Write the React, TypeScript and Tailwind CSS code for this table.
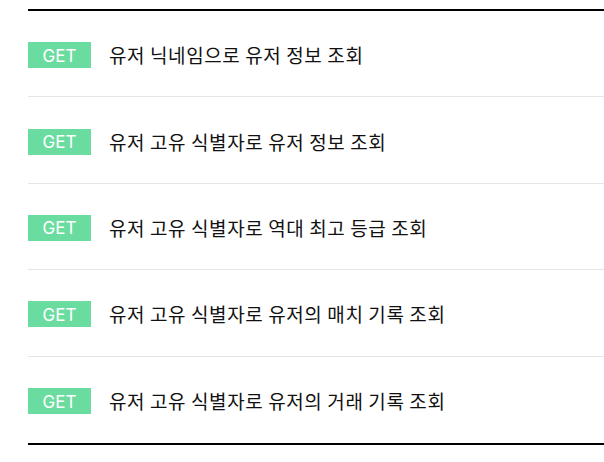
const apis = [
  '유저 닉네임으로 유저 정보 조회',
  '유저 고유 식별자로 유저 정보 조회',
  '유저 고유 식별자로 역대 최고 등급 조회',
  '유저 고유 식별자로 유저의 매치 기록 조회',
  '유저 고유 식별자로 유저의 거래 기록 조회',
]

export default function App() {
  return (
    <div className="min-h-screen bg-white pt-[9px] pl-[28px] font-['Noto_Sans_CJK_KR',sans-serif]">
      <ul className="border-y-2 border-black">
        {apis.map((title, idx) => (
          <li
            key={title}
            className={`flex h-[86.4px] items-center gap-[18px] pt-[3px] ${
              idx < apis.length - 1 ? 'border-b border-[#e5e5e5]' : ''
            }`}
          >
            <span className="flex h-[26px] w-[63px] items-center justify-center bg-[#6bdc9f] pt-[2px] font-['Inter',sans-serif] text-[17px] leading-none text-white">
              GET
            </span>
            <span className="text-[19px] leading-[26px] tracking-[0.6px] text-[#111]">{title}</span>
          </li>
        ))}
      </ul>
    </div>
  )
}
